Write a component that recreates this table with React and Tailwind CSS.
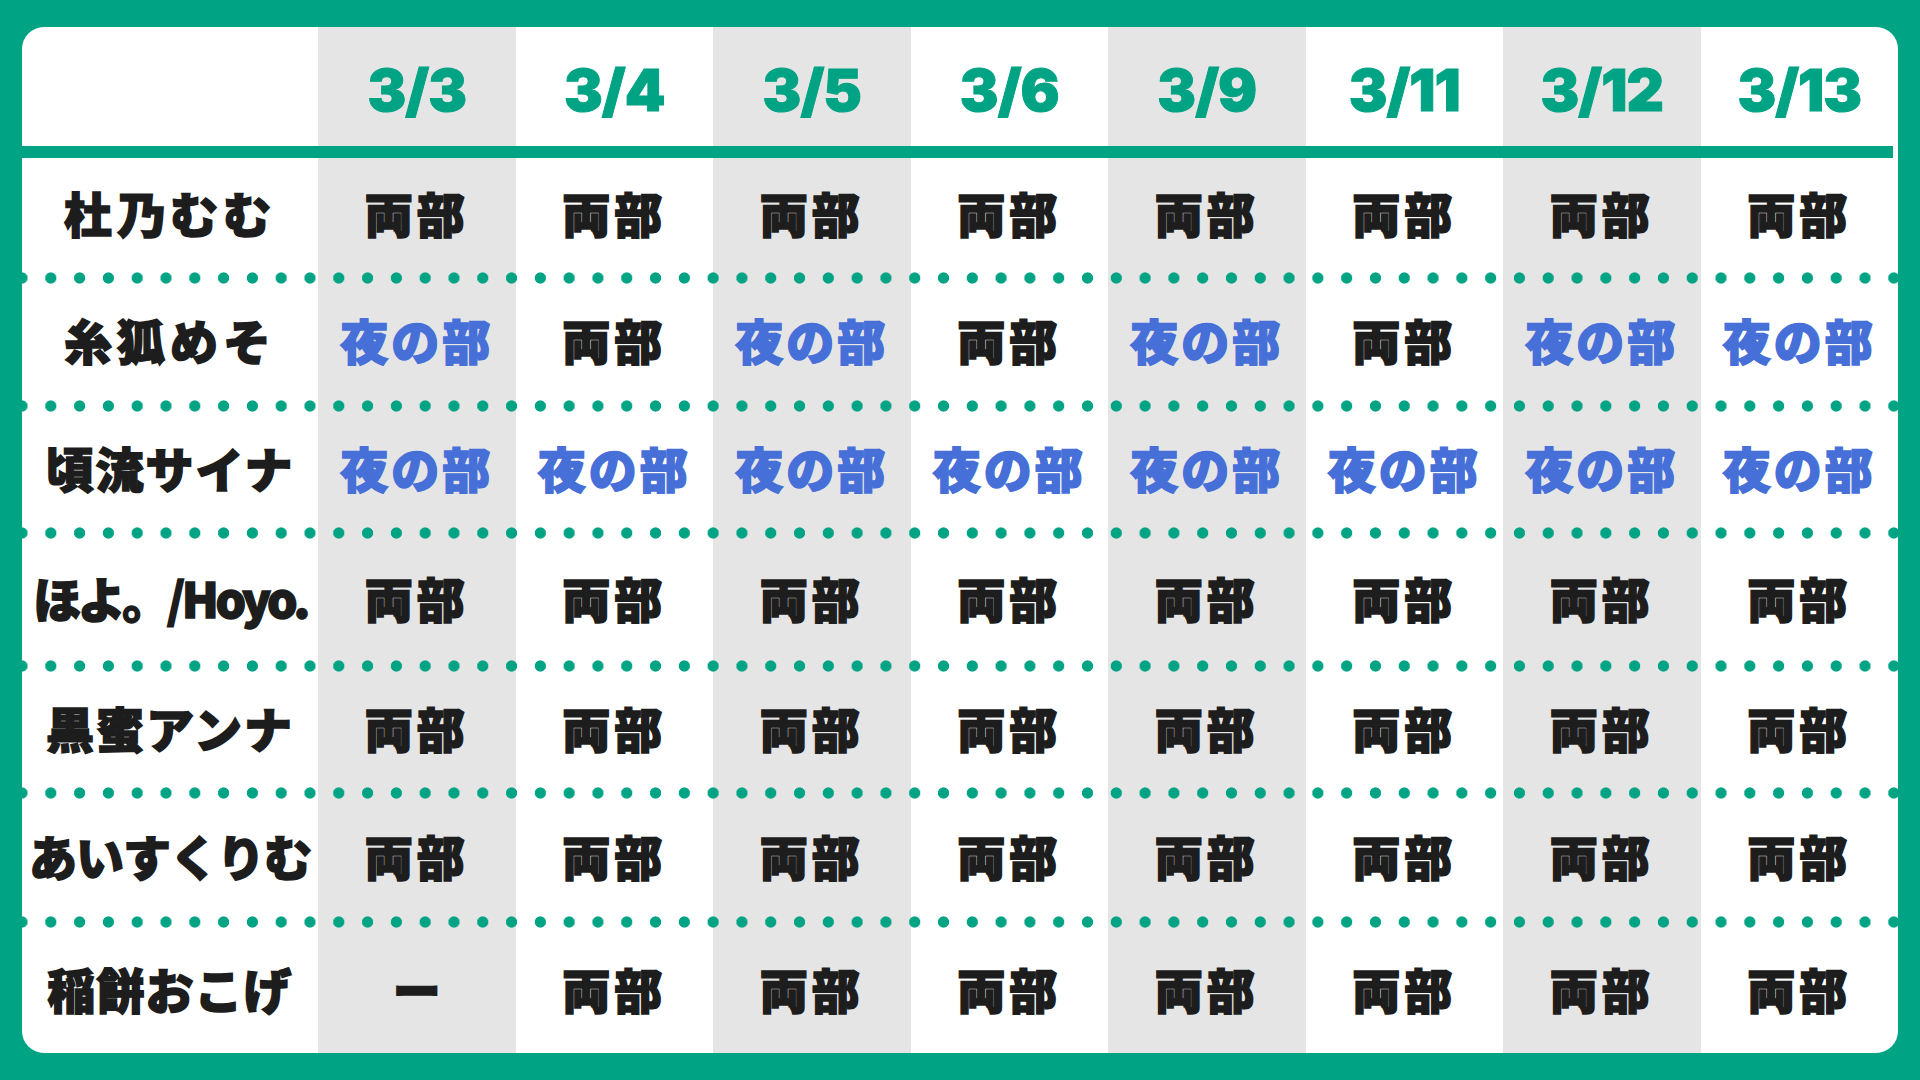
import React from "react";

const dates = ["3/3", "3/4", "3/5", "3/6", "3/9", "3/11", "3/12", "3/13"];

// b = 両部, n = 夜の部, x = not attending
const members = [
  { name: "杜乃むむ", track: "tracking-[5px]", cells: "bbbbbbbb" },
  { name: "糸狐めそ", track: "tracking-[5px]", cells: "nbnbnbnn" },
  { name: "頃流サイナ", track: "tracking-[2px]", cells: "nnnnnnnn" },
  { name: "ほよ。/Hoyo.", track: "tracking-[-3.5px]", cells: "bbbbbbbb" },
  { name: "黒蜜アンナ", track: "tracking-[2px]", cells: "bbbbbbbb" },
  { name: "あいすくりむ", track: "tracking-[-1px]", cells: "bbbbbbbb" },
  { name: "稲餅おこげ", track: "tracking-[1px]", cells: "xbbbbbbb" },
];

const COL = ["col-start-1", "col-start-2", "col-start-3", "col-start-4", "col-start-5", "col-start-6", "col-start-7", "col-start-8", "col-start-9"];
const ROW = ["row-start-3", "row-start-5", "row-start-7", "row-start-9", "row-start-11", "row-start-13", "row-start-15"];
const SEP = ["row-start-4", "row-start-6", "row-start-8", "row-start-10", "row-start-12", "row-start-14"];

const jp = "font-['Noto_Sans_CJK_JP',sans-serif] font-black text-[48px] leading-none whitespace-nowrap [-webkit-text-stroke:1.5px_currentColor]";

function Cell({ kind }) {
  if (kind === "x") {
    return <span className={`${jp} text-[#1d1d1d]`}>ー</span>;
  }
  if (kind === "n") {
    return <span className={`${jp} tracking-[3px] text-[#4670d8]`}>夜の部</span>;
  }
  return <span className={`${jp} tracking-[4px] text-[#1d1d1d]`}>両部</span>;
}

export default function App() {
  return (
    <div className="h-[1080px] w-[1920px] bg-[#00a383] px-[22px] py-[27px]">
      <div className="grid h-[1026px] grid-cols-[296px_repeat(8,minmax(0,1fr))] grid-rows-[119px_12px_114px_12px_116px_12px_115px_12px_121px_12px_115px_12px_117px_12px_125px] overflow-hidden rounded-[22px] bg-white">
        {/* shaded date columns */}
        <div className="col-start-2 row-span-full bg-[#e6e5e6]" />
        <div className="col-start-4 row-span-full bg-[#e6e5e6]" />
        <div className="col-start-6 row-span-full bg-[#e6e5e6]" />
        <div className="col-start-8 row-span-full bg-[#e6e5e6]" />

        {/* header */}
        {dates.map((d, i) => (
          <div
            key={d}
            className={`${COL[i + 1]} row-start-1 flex items-center justify-center pt-[6px] font-['Inter',sans-serif] text-[58px] font-black leading-none tracking-[-1px] text-[#00a383] [-webkit-text-stroke:1px_currentColor]`}
          >
            {d}
          </div>
        ))}
        <div className="col-span-full row-start-2 mr-[5px] bg-[#00a383]" />

        {/* members */}
        {members.map((m, r) => (
          <React.Fragment key={m.name}>
            <div className={`col-start-1 ${ROW[r]} flex items-center justify-center pb-[6px]`}>
              <span className={`${jp} text-[#1d1d1d] ${m.track}`}>{m.name}</span>
            </div>
            {m.cells.split("").map((c, i) => (
              <div key={i} className={`${COL[i + 1]} ${ROW[r]} flex items-center justify-center pb-[6px]`}>
                <Cell kind={c} />
              </div>
            ))}
            {r < SEP.length && (
              <div
                className={`col-span-full ${SEP[r]} bg-[radial-gradient(circle,#00a383_5.2px,transparent_6px)] bg-[length:28.8px_12px] bg-[position:-14.4px_0] bg-repeat-x`}
              />
            )}
          </React.Fragment>
        ))}
      </div>
    </div>
  );
}
